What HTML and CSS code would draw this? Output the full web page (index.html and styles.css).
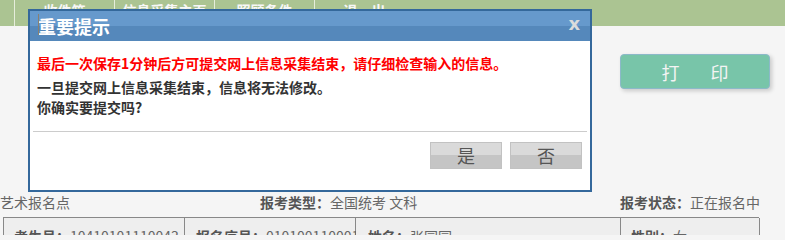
FILE: index.html
```html
<!DOCTYPE html>
<html lang="zh-CN">
<head>
<meta charset="utf-8">
<title>重要提示</title>
<link rel="stylesheet" href="styles.css">
</head>
<body>
<div class="nav">
  <div class="nav-item">收件箱</div>
  <div class="nav-item">信息采集主页</div>
  <div class="nav-item">照顾条件</div>
  <div class="nav-item">退　出</div>
</div>
<div class="main">
  <div class="print-row">
    <button class="print-btn"><span>打</span><span>印</span></button>
  </div>
  <div class="info-row">
    <div>艺术报名点</div>
    <div><span class="lbl">报考类型：</span>全国统考 文科</div>
    <div><span class="lbl">报考状态：</span>正在报名中</div>
  </div>
  <div class="table">
    <div class="cell c1"><span class="lbl">考生号：</span>10410101110043</div>
    <div class="cell c2"><span class="lbl">报名序号：</span>010100110001</div>
    <div class="cell c3"><span class="lbl">姓名：</span>张园园</div>
    <div class="cell c4"><span class="lbl">性别：</span>女</div>
  </div>
</div>

<div class="dialog">
  <div class="dlg-head">
    <span class="dlg-title"><i class="caret"></i>重要提示</span>
    <span class="dlg-close">x</span>
  </div>
  <div class="dlg-body">
    <p class="msg red">最后一次保存1分钟后方可提交网上信息采集结束，请仔细检查输入的信息。</p>
    <p class="msg">一旦提交网上信息采集结束，信息将无法修改。</p>
    <p class="msg">你确实要提交吗?</p>
    <div class="sep"></div>
    <div class="dlg-btns">
      <button class="gbtn">是</button>
      <button class="gbtn">否</button>
    </div>
  </div>
</div>
</body>
</html>
```

FILE: styles.css
```css
* { box-sizing: border-box; }
html, body { margin: 0; padding: 0; }
body {
  width: 785px;
  height: 235px;
  overflow: hidden;
  background: #f5f5f5;
  font-family: "Noto Sans CJK SC", "Liberation Sans", sans-serif;
  font-size: 14px;
  color: #666;
  position: relative;
}

.nav {
  height: 26px;
  background: #abc492;
  display: flex;
  padding-left: 14px;
}
.nav-item {
  width: 100px;
  border-left: 1px solid #e6eddc;
  color: #f7f7f7;
  font-size: 14px;
  font-weight: bold;
  line-height: 18px;
  padding-top: 1px;
  text-align: center;
}

.main { padding-top: 28px; }

.print-row {
  display: flex;
  justify-content: flex-end;
  padding-right: 15px;
}
.print-btn {
  width: 150px;
  height: 35px;
  background: #78c5a9;
  border: 1px solid #8cb9c9;
  border-radius: 4px;
  box-shadow: 2px 2px 4px rgba(0,0,0,0.18);
  color: #f4f4f4;
  font-family: "Noto Sans CJK SC", sans-serif;
  font-size: 18px;
  display: flex;
  justify-content: center;
  align-items: center;
  gap: 31px;
  padding: 0;
}

.info-row {
  margin-top: 103px;
  display: grid;
  grid-template-columns: 260px 360px auto;
  line-height: 20px;
  font-size: 14px;
  color: #666;
}
.lbl { font-weight: bold; color: #555; }

.table {
  margin-top: 5px;
  margin-left: 3px;
  width: 756px;
  display: grid;
  grid-template-columns: 181px 171px 265px 139px;
  border-top: 1px solid #888;
  border-left: 1px solid #888;
}
.cell {
  background: #eee;
  border-right: 1px solid #888;
  border-bottom: 1px solid #888;
  padding: 8px 0 8px 10px;
  line-height: 20px;
  white-space: nowrap;
}
.c2 { padding-left: 11px; }
.c3 { padding-left: 12px; }

.dialog {
  position: absolute;
  left: 28px;
  top: 9px;
  width: 564px;
  border: 2px solid #34689b;
  background: #fff;
}
.dlg-head {
  height: 30px;
  background: linear-gradient(#6699cc 0, #6699cc 50%, #5588bb 50%, #5588bb 100%);
  display: flex;
  justify-content: space-between;
  align-items: center;
  padding: 0 10px 0 8px;
}
.dlg-title {
  color: #fff;
  font-size: 18px;
  font-weight: bold;
  line-height: 30px;
  position: relative;
}
.caret {
  position: absolute;
  left: 0;
  top: 3px;
  width: 1px;
  height: 21px;
  background: #8a8070;
}
.dlg-close {
  color: #dcdcdc;
  font-family: "DejaVu Sans", sans-serif;
  font-weight: bold;
  font-size: 18px;
  line-height: 18px;
  margin-top: -5px;
}
.dlg-body {
  padding: 12px 0 21px 0;
}
.msg {
  margin: 0;
  padding-left: 7px;
  line-height: 20px;
  font-size: 14px;
  font-weight: bold;
  color: #333;
}
.msg.red { color: #ff0000; margin-bottom: 4px; }
.sep {
  margin: 14px 3px 0 3px;
  height: 1px;
  background: #cccccc;
}
.dlg-btns {
  margin-top: 10px;
  display: flex;
  justify-content: flex-end;
  gap: 8px;
  padding-right: 8px;
}
.gbtn {
  width: 72px;
  height: 27px;
  border: 1px solid #c2c2c2;
  background: linear-gradient(#dadada 0, #dadada 50%, #c5c5c5 50%, #c5c5c5 100%);
  color: #555;
  font-family: "Noto Sans CJK SC", sans-serif;
  font-size: 18px;
  line-height: 25px;
  padding: 0;
}
```
